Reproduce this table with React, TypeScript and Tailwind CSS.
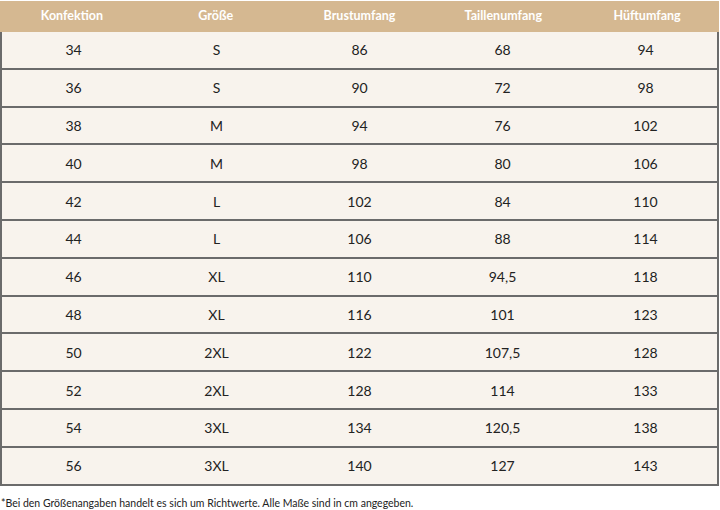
import React from 'react';

const headers = ['Konfektion', 'Größe', 'Brustumfang', 'Taillenumfang', 'Hüftumfang'];

const rows: string[][] = [
  ['34', 'S', '86', '68', '94'],
  ['36', 'S', '90', '72', '98'],
  ['38', 'M', '94', '76', '102'],
  ['40', 'M', '98', '80', '106'],
  ['42', 'L', '102', '84', '110'],
  ['44', 'L', '106', '88', '114'],
  ['46', 'XL', '110', '94,5', '118'],
  ['48', 'XL', '116', '101', '123'],
  ['50', '2XL', '122', '107,5', '128'],
  ['52', '2XL', '128', '114', '133'],
  ['54', '3XL', '134', '120,5', '138'],
  ['56', '3XL', '140', '127', '143'],
];

const App: React.FC = () => {
  return (
    <div className="w-[720px] h-[510px] bg-white pt-px font-['Lato','Liberation_Sans',sans-serif] text-[#222]">
      <div className="w-[719px]">
        {/* Kopfzeile */}
        <div className="grid grid-cols-5 h-[31px] bg-[#d5b891] text-white text-[12.5px] font-bold items-center">
          {headers.map(h => (
            <div key={h} className="text-center">{h}</div>
          ))}
        </div>
        {rows.map((r, i) => (
          <div key={i} className="grid grid-cols-5 h-[37.8px] items-center bg-[#f8f3ed] border-x-2 border-b-2 border-[#6b6b6b] text-[14px]">
            {r.map((c, j) => (
              <div key={j} className="text-center">{c}</div>
            ))}
          </div>
        ))}
      </div>
      <p className="mt-[10px] pl-px text-[10.5px] leading-[14px] text-[#222]">
        *Bei den Größenangaben handelt es sich um Richtwerte. Alle Maße sind in cm angegeben.
      </p>
    </div>
  );
};

export default App;
